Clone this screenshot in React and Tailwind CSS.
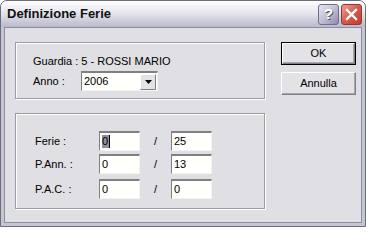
import React from 'react';

const font = { fontFamily: '"Liberation Sans", Arial, sans-serif' };

// sunken XP edit box
function Field({ value, selected }) {
  return (
    <div className="w-[41px] h-[20px] border-t-2 border-l border-[#7f7f86] border-r border-b border-r-[#f4f3ee] border-b-[#f4f3ee] bg-[#fffffb] flex items-center pl-[2px] text-[11px] text-black">
      {selected ? (
        <span className="bg-[#8f8fa0] text-black leading-[13px] pr-[1px] border-r border-black">{value}</span>
      ) : (
        value
      )}
    </div>
  );
}

function Row({ label, a, b, selected, className }) {
  return (
    <div className={`flex items-center ${className}`}>
      <span className="w-[64px]">{label}</span>
      <Field value={a} selected={selected} />
      <span className="w-[31px] text-center">/</span>
      <Field value={b} />
    </div>
  );
}

function Button({ children, isDefault, className }) {
  return (
    <div className={`w-[75px] h-[23px] ${isDefault ? 'border border-black' : ''} ${className}`}>
      <div className="w-full h-full border border-t-white border-l-white border-r-[#808086] border-b-[#808086] shadow-[inset_-1px_-1px_0_#a7a6aa] bg-[#e3e2e6] flex items-center justify-center text-[11px] text-black">
        {children}
      </div>
    </div>
  );
}

export default function App() {
  return (
    <div className="w-[366px] h-[227px] flex flex-col bg-[#c6c6d2] border border-[#6d6d80] rounded-t-[7px] overflow-hidden" style={font}>
      {/* Title bar */}
      <div className="h-[26px] shrink-0 flex items-center justify-between pl-[6px] pr-[3px] bg-gradient-to-b from-[#ffffff] via-[#e3e3ec] to-[#b9b9c9]">
        <span className="text-[13px] font-bold text-[#111]">Definizione Ferie</span>
        <div className="flex gap-[2px]">
          <div className="w-[21px] h-[21px] rounded-[3px] border border-[#6f6f8c] bg-gradient-to-br from-[#e6e6f2] via-[#c0c0d4] to-[#8c8cac] flex items-center justify-center text-white font-bold text-[15px] [text-shadow:1px_1px_0_#555]">
            ?
          </div>
          <div className="w-[21px] h-[21px] rounded-[3px] border border-[#8c3a3a] bg-gradient-to-br from-[#f0a090] via-[#d8584a] to-[#c03c30] flex items-center justify-center">
            <svg width="13" height="13" viewBox="0 0 13 13">
              <path d="M2 2 L11 11 M11 2 L2 11" stroke="white" strokeWidth="2.4" strokeLinecap="square" />
            </svg>
          </div>
        </div>
      </div>

      {/* Client area */}
      <div className="flex-1 mx-[3px] mb-[3px] border border-[#8e8ea2] bg-[#e0dfe3] flex pl-[10px] pt-[14px] text-[11px] text-black">
        <div className="flex flex-col w-[250px]">
          <div className="h-[57px] border border-[#9c9ca2] shadow-[inset_1px_1px_0_#fff,1px_1px_0_#fff] pl-[17px] pt-[12px]">
            <div className="leading-[13px]">Guardia : 5 - ROSSI MARIO</div>
            <div className="flex items-center mt-[3px]">
              <span className="w-[48px]">Anno :</span>
              <div className="w-[77px] h-[20px] border-t-2 border-l border-[#7f7f86] border-r border-b border-r-[#f4f3ee] border-b-[#f4f3ee] bg-[#fffffb] flex items-center pl-[2px] pr-[1px]">
                <span className="flex-1">2006</span>
                <div className="w-[16px] h-[16px] border border-t-white border-l-white border-r-[#808086] border-b-[#808086] bg-[#e3e2e6] flex items-center justify-center">
                  <svg width="7" height="4" viewBox="0 0 7 4">
                    <path d="M0 0 H7 L3.5 4 Z" fill="black" />
                  </svg>
                </div>
              </div>
            </div>
          </div>

          <div className="h-[96px] mt-[14px] border border-[#9c9ca2] shadow-[inset_1px_1px_0_#fff,1px_1px_0_#fff] pl-[19px] pt-[17px]">
            <Row label="Ferie :" a="0" b="25" selected />
            <Row label="P.Ann. :" a="0" b="13" className="mt-[3px]" />
            <Row label="P.A.C. :" a="0" b="0" className="mt-[5px]" />
          </div>
        </div>

        <div className="ml-[16px] flex flex-col">
          <Button isDefault>OK</Button>
          <Button className="mt-[7px]">Annulla</Button>
        </div>
      </div>
    </div>
  );
}
